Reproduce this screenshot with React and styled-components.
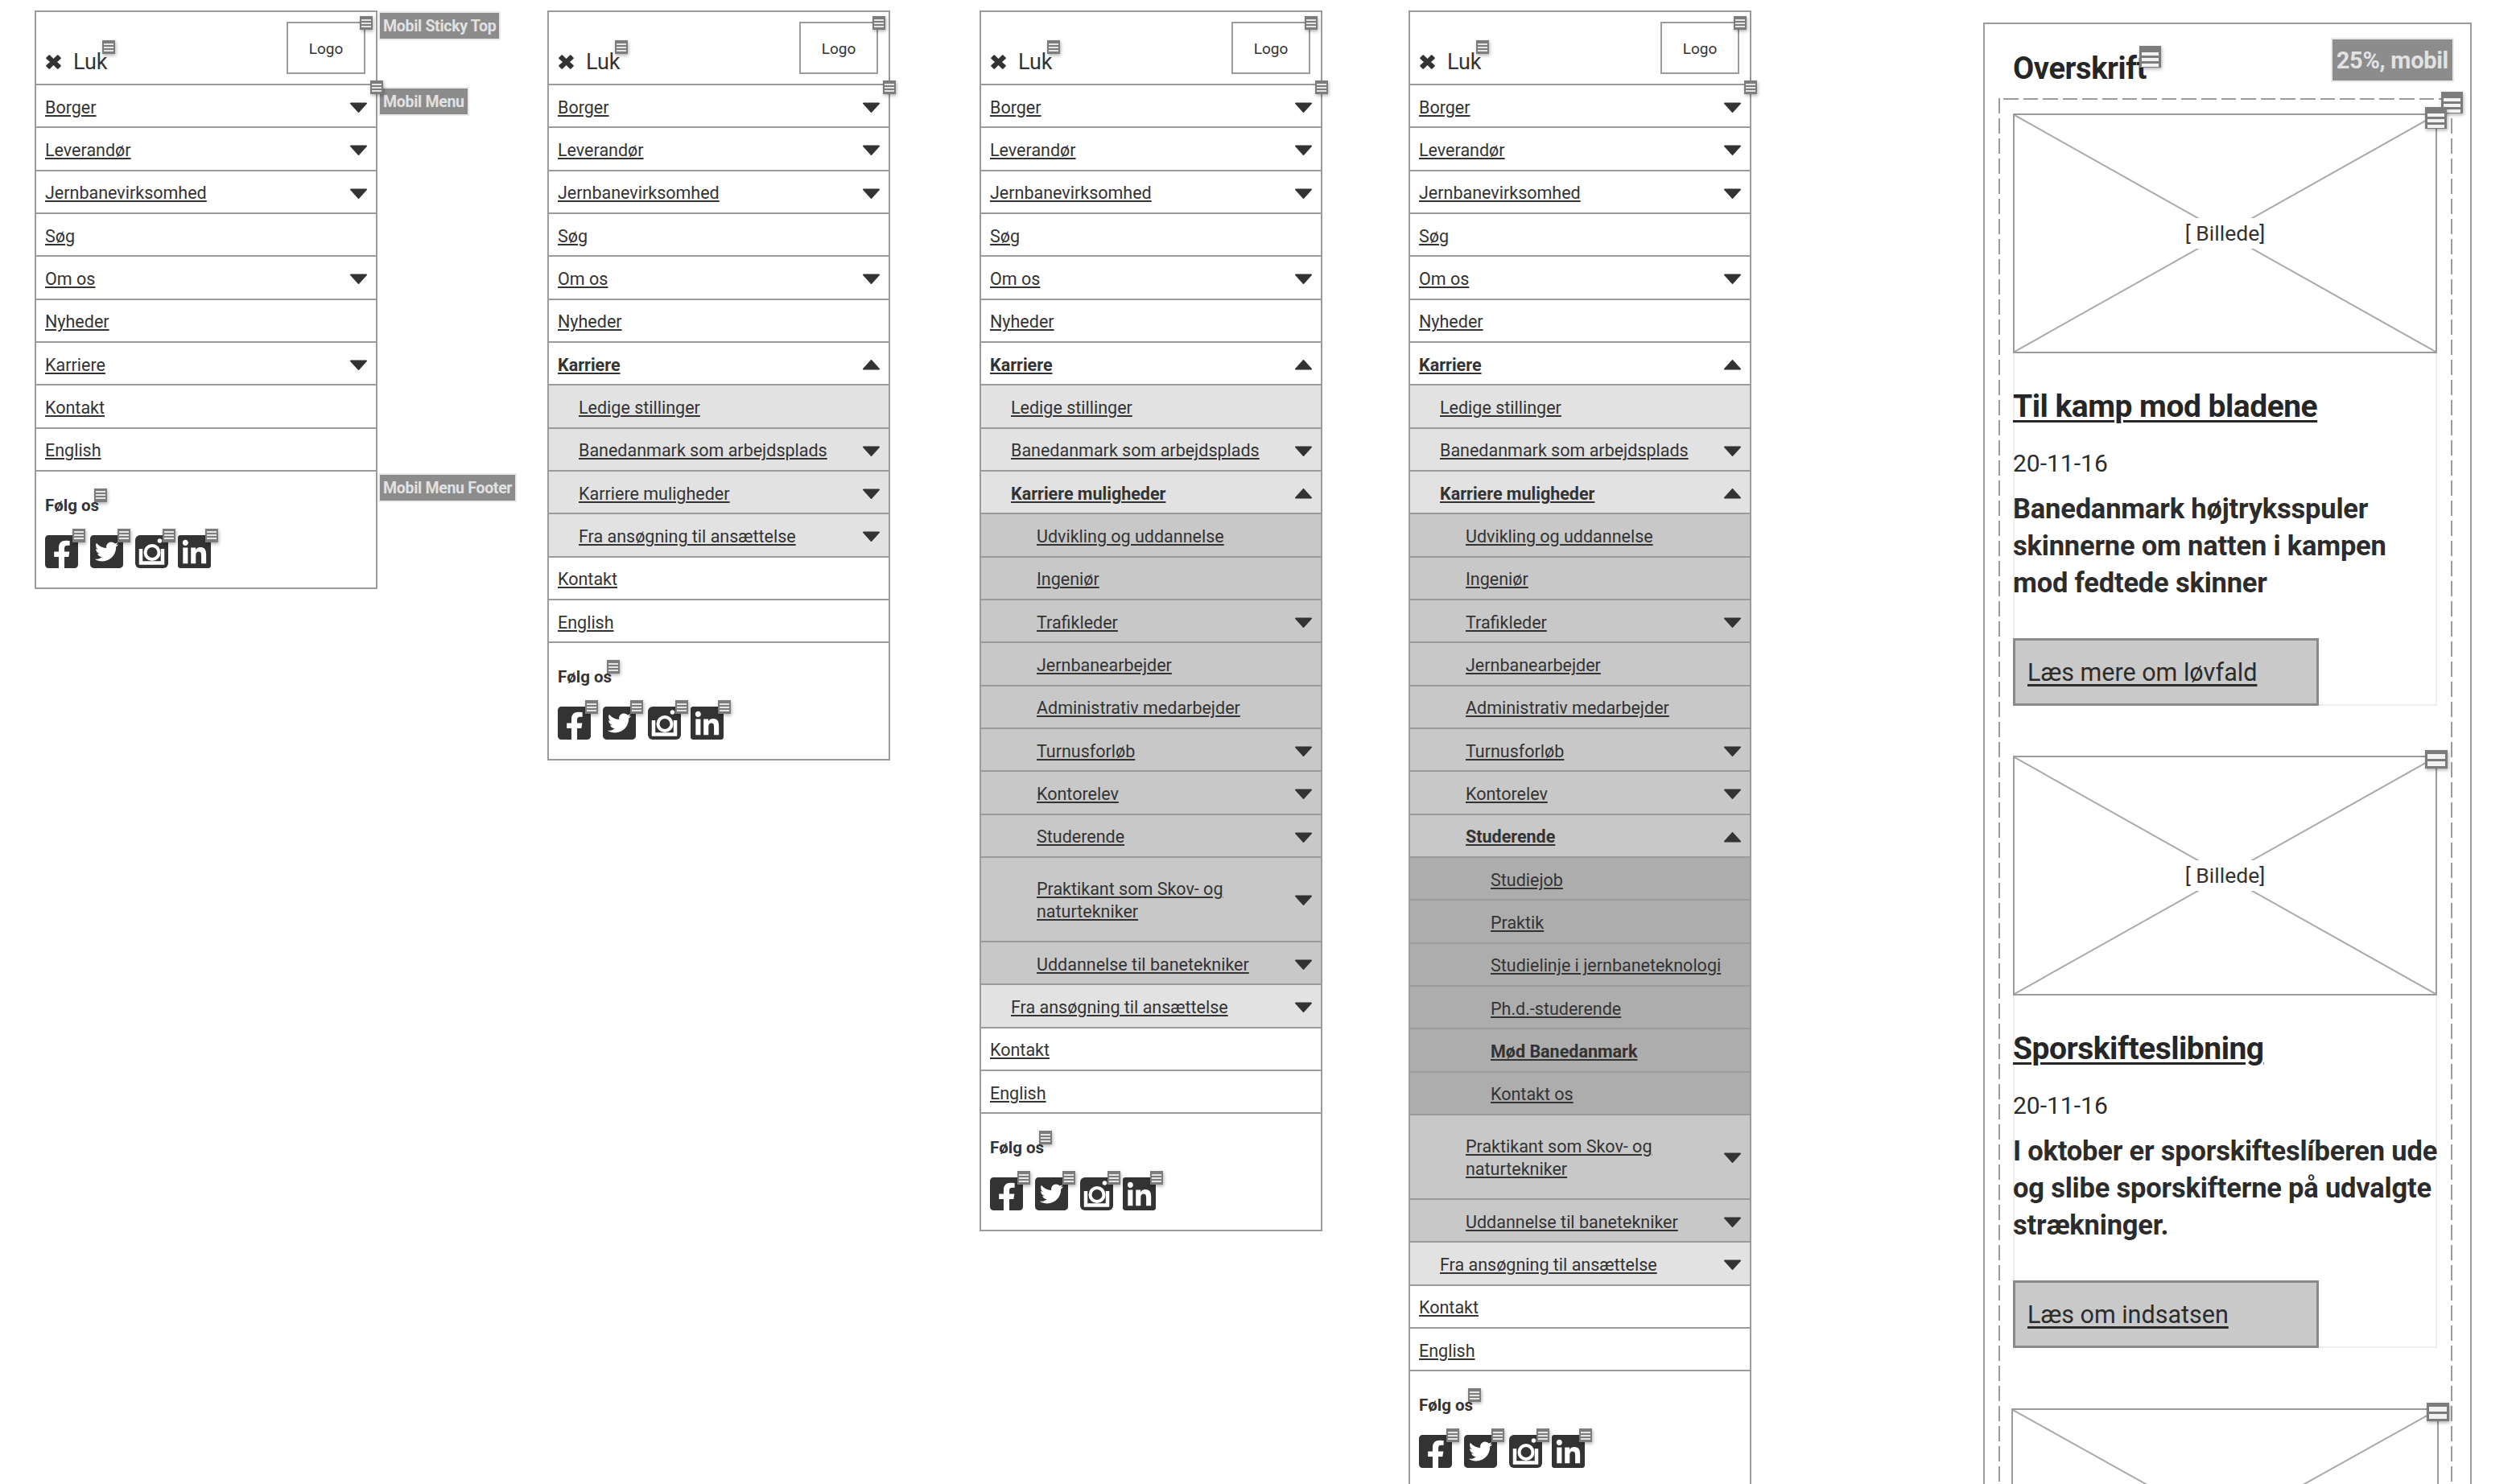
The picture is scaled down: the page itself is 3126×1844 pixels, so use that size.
import React from 'react'
import styled, {createGlobalStyle} from 'styled-components'
import {FaFacebookSquare, FaTwitterSquare, FaLinkedin} from 'react-icons/fa'

const GlobalStyle = createGlobalStyle`
  html, body {
    margin: 0;
    padding: 0;
    background: #fff;
    height: 1844px;
    overflow: hidden;
  }
  * { box-sizing: border-box; }
`

const Board = styled.div`
  display: flex;
  align-items: flex-start;
  width: 3126px;
  height: 1844px;
  overflow: hidden;
  padding: 13px 0 0 43px;
  font-family: Roboto, "Liberation Sans", sans-serif;
  color: #333;
`

const Panel = styled.div`
  position: relative;
  flex: none;
  width: 426px;
  margin-left: ${p => p.$gap || 0}px;
  border: 2px solid #9b9b9b;
  background: #fff;
`

const Header = styled.div`
  display: flex;
  align-items: flex-end;
  justify-content: space-between;
  height: 91px;
  padding: 12px 13px 12px 12px;
  border-bottom: 2px solid #9b9b9b;
`

const Close = styled.div`
  position: relative;
  display: flex;
  align-items: center;
  gap: 15px;
  font-size: 27px;
  line-height: 30px;
  color: #333;
`

const LogoBox = styled.div`
  position: relative;
  align-self: flex-start;
  display: flex;
  align-items: center;
  justify-content: center;
  width: 98px;
  height: 65px;
  padding-top: 2px;
  border: 2px solid #9b9b9b;
  font-size: 19px;
`

const levelIndent = [11, 37, 69, 100]
const levelColor = ['#fff', '#e2e2e2', '#c8c8c8', '#adadad']

const Row = styled.div`
  position: relative;
  display: flex;
  align-items: center;
  justify-content: space-between;
  min-height: 53.33px;
  padding: ${p => p.$tall ? '25px' : '4px'} 11px ${p => p.$tall ? '22px' : '0'} ${p => levelIndent[p.$level]}px;
  background: ${p => levelColor[p.$level]};
  border-bottom: 2px solid #9b9b9b;
`

const RowLink = styled.a`
  max-width: 320px;
  font-size: 21.5px;
  line-height: 28px;
  font-weight: ${p => p.$bold ? 700 : 400};
  color: #333;
  text-decoration: underline;
  text-decoration-thickness: 2px;
  text-underline-offset: 2px;
`

const Caret = styled.svg`
  flex: none;
  width: 21px;
  height: 13px;
  fill: #333;
  transform: ${p => p.$open ? 'rotate(180deg)' : 'none'};
`

const Footer = styled.div`
  padding: 28px 11px 0;
  height: 144px;
`

const FollowLabel = styled.div`
  position: relative;
  display: inline-block;
  font-size: 20.5px;
  line-height: 28px;
  font-weight: 700;
`

const Socials = styled.div`
  display: flex;
  gap: 15px;
  margin-top: 23px;
`

const Social = styled.div`
  position: relative;
  width: 41px;
  height: 41px;
  margin-right: ${p => p.$tight ? -3 : 0}px;
  color: #333;
  svg { display: block; }
`

const NoteBox = styled.div`
  position: absolute;
  z-index: 3;
  top: ${p => p.$top}px;
  right: ${p => p.$right}px;
  width: ${p => p.$pale ? 28 : p.$big ? 27 : 16}px;
  height: ${p => p.$pale ? 23 : p.$big ? 27 : 17}px;
  display: flex;
  flex-direction: column;
  justify-content: ${p => p.$big ? 'flex-end' : 'center'};
  gap: ${p => p.$big ? 3 : 2}px;
  padding: ${p => p.$pale ? '3px 3px' : p.$big ? '0 3px 1px' : '0 2px'};
  background: #7c7c7c;
  box-shadow: 1px 2px 4px rgba(0, 0, 0, 0.3);
`

const NoteBar = styled.span`
  display: block;
  flex: none;
  height: ${p => p.$pale ? 6 : p.$big ? 4 : 2}px;
  background: ${p => p.$big ? '#f2f2f2' : '#e4e4e4'};
`

const Tag = styled.div`
  position: absolute;
  z-index: 2;
  top: ${p => p.$top}px;
  left: ${p => p.$left === undefined ? 'auto' : `${p.$left}px`};
  right: ${p => p.$right === undefined ? 'auto' : `${p.$right}px`};
  height: ${p => p.$big ? 55 : 36}px;
  padding: 0 ${p => p.$big ? 5 : 4}px;
  display: flex;
  align-items: center;
  background: #8c8c8c;
  border: 2px solid #e9e9e9;
  color: #e2e2e2;
  font-size: ${p => p.$big ? 29 : 19.5}px;
  font-weight: 700;
  letter-spacing: -0.3px;
  white-space: nowrap;
`

const NewsPanel = styled.div`
  position: relative;
  flex: none;
  width: 607px;
  height: 1900px;
  margin-left: 288px;
  margin-top: 15px;
  padding: 0 22px 0 17px;
  border: 2px solid #9b9b9b;
  background: #fff;
`

const NewsTitle = styled.h2`
  position: relative;
  display: inline-block;
  margin: 34px 0 0 18px;
  font-size: 38px;
  line-height: 42px;
  font-weight: 700;
  letter-spacing: -0.4px;
  color: #262626;
`

const Dashed = styled.div`
  position: relative;
  margin-top: 16px;
  padding: 19px 19px 18px 18px;
  height: 1800px;
  background:
    repeating-linear-gradient(90deg, transparent 0 6px, #9b9b9b 6px 24.6px) top left / 100% 2px no-repeat,
    repeating-linear-gradient(180deg, #9b9b9b 0 19px, transparent 19px 25px) top left / 2px 100% no-repeat,
    repeating-linear-gradient(180deg, #9b9b9b 0 19px, transparent 19px 25px) top right / 2px 100% no-repeat;
`

const Article = styled.article`
  position: relative;
  margin-bottom: ${p => p.$after}px;
  border-right: 2px solid #eee;
  border-bottom: 2px solid #eee;
  border-left: 2px solid #eee;
`

const Picture = styled.div`
  position: relative;
  display: flex;
  align-items: center;
  justify-content: center;
  height: 298px;
  margin: 0 -2px;
  border: 2px solid #9b9b9b;
`

const PictureLines = styled.svg`
  position: absolute;
  inset: 0;
  width: 100%;
  height: 100%;
  stroke: #aaa;
  stroke-width: 2;
`

const PictureLabel = styled.span`
  position: relative;
  padding: 4px 6px;
  background: #fff;
  font-size: 26.5px;
  line-height: 30px;
  color: #333;
`

const ArticleTitle = styled.a`
  display: block;
  width: max-content;
  margin: 42px 0 0 -2px;
  font-size: 39px;
  line-height: 48px;
  font-weight: 700;
  letter-spacing: -0.5px;
  color: #262626;
  text-decoration: underline;
  text-decoration-thickness: 3px;
  text-underline-offset: 4px;
`

const ArticleDate = styled.div`
  margin: 29px 0 0 -2px;
  font-size: 30px;
  line-height: 36px;
  color: #2c2c2c;
`

const ArticleBody = styled.p`
  margin: 15px -10px 0 -2px;
  font-size: 34.5px;
  line-height: 46px;
  font-weight: 700;
  letter-spacing: -0.2px;
  color: #2c2c2c;
`

const ReadMore = styled.a`
  display: flex;
  align-items: center;
  width: 380px;
  height: 84px;
  margin: 46px 0 -2px -2px;
  padding-left: 15px;
  background: #c9c9c9;
  border: 3px solid #8a8a8a;
  font-size: 30.5px;
  color: #2c2c2c;
  text-decoration: underline;
  text-decoration-thickness: 3px;
  text-underline-offset: 4px;
`

const coreItems = (karriere) => [
  {label: 'Borger', caret: true},
  {label: 'Leverandør', caret: true},
  {label: 'Jernbanevirksomhed', caret: true},
  {label: 'Søg'},
  {label: 'Om os', caret: true},
  {label: 'Nyheder'},
  karriere,
  {label: 'Kontakt'},
  {label: 'English'},
]

const careerSub = (muligheder) => [
  {label: 'Ledige stillinger'},
  {label: 'Banedanmark som arbejdsplads', caret: true},
  muligheder,
  {label: 'Fra ansøgning til ansættelse', caret: true},
]

const optionSub = (studerende) => [
  {label: 'Udvikling og uddannelse'},
  {label: 'Ingeniør'},
  {label: 'Trafikleder', caret: true},
  {label: 'Jernbanearbejder'},
  {label: 'Administrativ medarbejder'},
  {label: 'Turnusforløb', caret: true},
  {label: 'Kontorelev', caret: true},
  studerende,
  {label: 'Praktikant som Skov- og naturtekniker', caret: true, tall: true},
  {label: 'Uddannelse til banetekniker', caret: true},
]

const studentSub = [
  {label: 'Studiejob'},
  {label: 'Praktik'},
  {label: 'Studielinje i jernbaneteknologi'},
  {label: 'Ph.d.-studerende'},
  {label: 'Mød Banedanmark', bold: true},
  {label: 'Kontakt os'},
]

const closedOptions = {label: 'Karriere muligheder', caret: true}
const openStudents = {label: 'Studerende', caret: true, open: true, bold: true, children: studentSub}

const menus = [
  coreItems({label: 'Karriere', caret: true}),
  coreItems({label: 'Karriere', caret: true, open: true, bold: true, children: careerSub(closedOptions)}),
  coreItems({label: 'Karriere', caret: true, open: true, bold: true, children: careerSub({
    label: 'Karriere muligheder', caret: true, open: true, bold: true,
    children: optionSub({label: 'Studerende', caret: true}),
  })}),
  coreItems({label: 'Karriere', caret: true, open: true, bold: true, children: careerSub({
    label: 'Karriere muligheder', caret: true, open: true, bold: true,
    children: optionSub(openStudents),
  })}),
]

const panelGaps = [0, 211, 111, 107]

function Note({top, right, big, pale}) {
  const bars = pale ? [0, 1] : [0, 1, 2]
  return (
    <NoteBox $top={top} $right={right} $big={big} $pale={pale}>
      {bars.map(b => <NoteBar key={b} $big={big} $pale={pale} />)}
    </NoteBox>
  )
}

function MenuRows({items, level}) {
  return items.map(item => (
    <React.Fragment key={item.label}>
      <Row $level={level} $tall={item.tall}>
        <RowLink $bold={item.bold}>{item.label}</RowLink>
        {item.caret && (
          <Caret $open={item.open} viewBox="0 0 21 13">
            <path d="M1 0.5h19a1 1 0 0 1 .8 1.6l-9.5 10.4a1 1 0 0 1-1.6 0L.2 2.1A1 1 0 0 1 1 .5z" />
          </Caret>
        )}
      </Row>
      {item.children && <MenuRows items={item.children} level={level + 1} />}
    </React.Fragment>
  ))
}

function InstagramIcon() {
  return (
    <svg width="41" height="41" viewBox="0 0 41 41">
      <rect width="41" height="41" rx="6" fill="currentColor" />
      <path d="M7 17v17.500h27V17" fill="none" stroke="#fff" strokeWidth="4.500" />
      <circle cx="21" cy="21.500" r="8.500" fill="none" stroke="#fff" strokeWidth="4" />
      <circle cx="30.500" cy="7" r="2.800" fill="#fff" />
    </svg>
  )
}

const squareBox = '0 32 448 448'

function MenuPanel({items, gap, tags}) {
  return (
    <Panel $gap={gap}>
      <Header>
        <Close>
          <svg width="19" height="18" viewBox="0 0 19 18">
            <path fill="#333" d="M5 .5 9.500 5 14 .5q.8-.6 1.500 0l3 3q.6.700 0 1.500L14 9l4.500 4q.6.800 0 1.500l-3 3q-.7.600-1.500 0L9.500 13 5 17.500q-.8.600-1.500 0l-3-3q-.6-.7 0-1.500L5 9 .5 5q-.6-.8 0-1.500l3-3Q4.200 0 5 .5z" />
          </svg>
          Luk
          <Note top={-12} right={-9} />
        </Close>
        <LogoBox>
          Logo
          <Note top={-9} right={-11} />
        </LogoBox>
      </Header>
      <Note top={85} right={-9} />
      <MenuRows items={items} level={0} />
      <Footer>
        <FollowLabel>
          Følg os
          <Note top={-7} right={-10} />
        </FollowLabel>
        <Socials>
          <Social><FaFacebookSquare size={41} viewBox={squareBox} /><Note top={-8} right={-9} /></Social>
          <Social><FaTwitterSquare size={41} viewBox={squareBox} /><Note top={-8} right={-9} /></Social>
          <Social $tight><InstagramIcon /><Note top={-8} right={-9} /></Social>
          <Social><FaLinkedin size={41} viewBox={squareBox} /><Note top={-8} right={-9} /></Social>
        </Socials>
      </Footer>
      {tags && (
        <>
          <Tag $top={-1} $left={425}>Mobil Sticky Top</Tag>
          <Tag $top={93} $left={425}>Mobil Menu</Tag>
          <Tag $top={573} $left={425}>Mobil Menu Footer</Tag>
        </>
      )}
    </Panel>
  )
}

const articles = [
  {
    title: 'Til kamp mod bladene',
    date: '20-11-16',
    body: 'Banedanmark højtryksspuler skinnerne om natten i kampen mod fedtede skinner',
    link: 'Læs mere om løvfald',
    after: 62,
  },
  {
    title: 'Sporskifteslibning',
    date: '20-11-16',
    body: 'I oktober er sporskifteslíberen ude og slibe sporskifterne på udvalgte strækninger.',
    link: 'Læs om indsatsen',
    after: 75,
  },
]

function WirePicture({pale, noteTop, label}) {
  return (
    <Picture>
      <PictureLines viewBox="0 0 100 100" preserveAspectRatio="none">
        <line x1="0" y1="0" x2="100" y2="100" vectorEffect="non-scaling-stroke" />
        <line x1="100" y1="0" x2="0" y2="100" vectorEffect="non-scaling-stroke" />
      </PictureLines>
      {label && <PictureLabel>{label}</PictureLabel>}
      <Note big pale={pale} top={noteTop} right={pale ? -15 : -14} />
    </Picture>
  )
}

function NewsColumn() {
  return (
    <NewsPanel>
      <NewsTitle>
        Overskrift
        <Note big top={-7} right={-18} />
      </NewsTitle>
      <Tag $big $top={17} $right={20}>25%, mobil</Tag>
      <Dashed>
        <Note big top={-8} right={-13} />
        {articles.map((a, i) => (
          <Article key={a.title} $after={a.after}>
            <WirePicture pale={i > 0} noteTop={i > 0 ? -9 : -10} label="[ Billede]" />
            <ArticleTitle>{a.title}</ArticleTitle>
            <ArticleDate>{a.date}</ArticleDate>
            <ArticleBody>{a.body}</ArticleBody>
            <ReadMore>{a.link}</ReadMore>
          </Article>
        ))}
        <WirePicture pale noteTop={-9} />
      </Dashed>
    </NewsPanel>
  )
}

export default function App() {
  return (
    <>
      <GlobalStyle />
      <Board>
        {menus.map((items, i) => (
          <MenuPanel key={i} items={items} gap={panelGaps[i]} tags={i === 0} />
        ))}
        <NewsColumn />
      </Board>
    </>
  )
}
